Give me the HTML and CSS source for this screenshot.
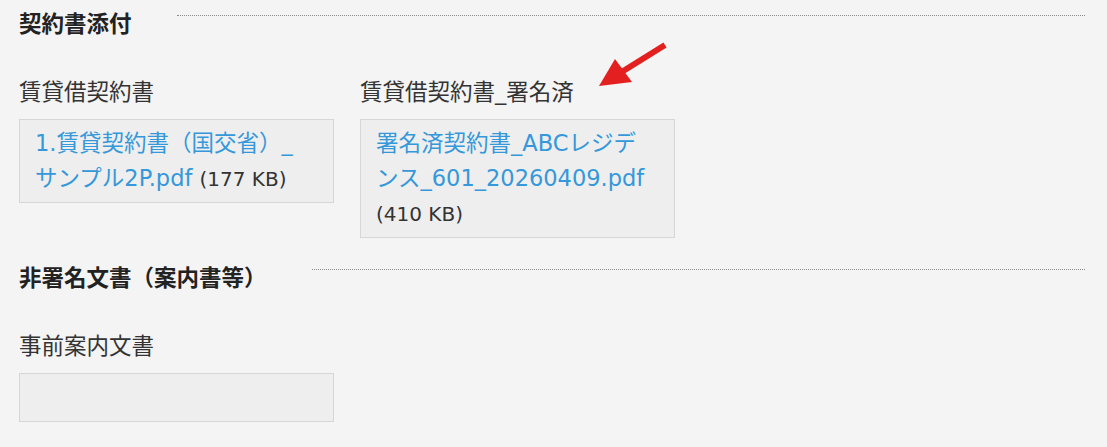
FILE: index.html
```html
<!DOCTYPE html>
<html lang="ja">
<head>
  <meta charset="UTF-8" />
  <meta name="viewport" content="width=device-width, initial-scale=1.0"/>
  <title>契約書添付</title>
  <link rel="stylesheet" href="styles.css">
</head>
<body>
  <div class="page">
    <!-- 契約書添付 -->
    <section class="section">
      <div class="section-head">
        <h2 class="section-title">契約書添付</h2>
        <span class="section-rule"></span>
      </div>
      <div class="fields">
        <div class="field">
          <div class="field-label">賃貸借契約書</div>
          <div class="file-box">
            <a href="#" class="file-link">1.賃貸契約書（国交省）_サンプル2P.pdf</a>
            <span class="file-size">(177 KB)</span>
          </div>
        </div>
        <div class="field">
          <div class="field-label">賃貸借契約書_署名済</div>
          <div class="file-box">
            <a href="#" class="file-link">署名済契約書_ABCレジデンス_601_20260409.pdf</a>
            <span class="file-size">(410 KB)</span>
          </div>
        </div>
      </div>
    </section>

    <!-- 非署名文書 -->
    <section class="section">
      <div class="section-head">
        <h2 class="section-title">非署名文書（案内書等）</h2>
        <span class="section-rule"></span>
      </div>
      <div class="fields">
        <div class="field">
          <div class="field-label">事前案内文書</div>
          <div class="file-box"></div>
        </div>
      </div>
    </section>
  </div>

  <!-- annotation arrow -->
  <svg class="arrow" width="80" height="56" viewBox="0 0 80 56">
    <line x1="75" y1="7" x2="30" y2="35" stroke="#e3201f" stroke-width="6"/>
    <polygon points="9,48 25,21 42,44" fill="#e3201f"/>
  </svg>
</body>
</html>
```

FILE: styles.css
```css
body {
  margin: 0;
  background-color: #f4f4f4;
  font-family: "DejaVu Sans", "Noto Sans CJK JP", sans-serif;
  font-size: 22.5px;
  line-height: 35px;
  color: #333;
}

.page {
  padding: 7px 22px 20px 19px;
}

.section {
  margin-bottom: 23px;
}

.section-head {
  display: flex;
  align-items: flex-start;
  margin-bottom: 33px;
}

.section-title {
  margin: 0;
  font-size: 22.5px;
  line-height: 35px;
  font-weight: bold;
  color: #222;
}

.section-rule {
  flex: 1;
  margin-top: 8px;
  margin-left: 45px;
  border-top: 1px dotted #8a8a8a;
}

.fields {
  display: flex;
  gap: 26px;
}

.field {
  width: 315px;
}

.field-label {
  margin-bottom: 9px;
  color: #333;
}

.file-box {
  min-height: 35px;
  padding: 6px 24px 6px 15px;
  background-color: #eeeeee;
  border: 1px solid #d6d6d6;
}

.file-link {
  color: #3598db;
  text-decoration: none;
}

.file-size {
  font-size: 20px;
  line-height: 20px;
  color: #333;
}

.arrow {
  position: absolute;
  left: 590px;
  top: 38px;
}
```
